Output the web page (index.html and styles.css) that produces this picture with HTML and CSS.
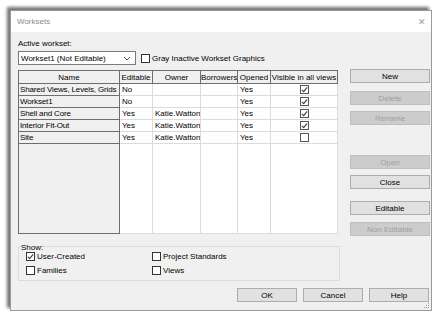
FILE: index.html
```html
<!DOCTYPE html>
<html lang="en">
<head>
    <meta charset="UTF-8">
    <title>Worksets</title>
    <link rel="stylesheet" href="styles.css">
</head>
<body>
    <div class="dialog">
        <div class="titlebar">
            <span class="title">Worksets</span>
            <span class="close">&#x2715;</span>
        </div>
        <div class="content">
            <div class="main">
                <div class="label">Active workset:</div>
                <div class="toprow">
                    <div class="select">
                        <span>Workset1 (Not Editable)</span>
                        <svg width="8" height="5" viewBox="0 0 8 5"><path d="M1 1 L4 4 L7 1" fill="none" stroke="#555" stroke-width="1"/></svg>
                    </div>
                    <label class="check"><span class="box"></span>Gray Inactive Workset Graphics</label>
                </div>
                <table class="grid">
                    <colgroup>
                        <col style="width:101px"><col style="width:33px"><col style="width:48px"><col style="width:37px"><col style="width:33px"><col>
                    </colgroup>
                    <thead>
                        <tr><th>Name</th><th>Editable</th><th>Owner</th><th>Borrowers</th><th>Opened</th><th>Visible in all views</th></tr>
                    </thead>
                    <tbody>
                        <tr><td class="name">Shared Views, Levels, Grids</td><td>No</td><td></td><td></td><td>Yes</td><td class="vis"><span class="box on"></span></td></tr>
                        <tr><td class="name">Workset1</td><td>No</td><td></td><td></td><td>Yes</td><td class="vis"><span class="box on"></span></td></tr>
                        <tr><td class="name">Shell and Core</td><td>Yes</td><td>Katie.Watton</td><td></td><td>Yes</td><td class="vis"><span class="box on"></span></td></tr>
                        <tr><td class="name">Interior Fit-Out</td><td>Yes</td><td>Katie.Watton</td><td></td><td>Yes</td><td class="vis"><span class="box on"></span></td></tr>
                        <tr><td class="name">Site</td><td>Yes</td><td>Katie.Watton</td><td></td><td>Yes</td><td class="vis"><span class="box"></span></td></tr>
                        <tr class="filler"><td class="name"></td><td></td><td></td><td></td><td></td><td></td></tr>
                    </tbody>
                </table>
                <div class="show">
                    <div class="show-title">Show:</div>
                    <div class="show-grid">
                        <label class="check"><span class="box on"></span>User-Created</label>
                        <label class="check"><span class="box"></span>Project Standards</label>
                        <label class="check"><span class="box"></span>Families</label>
                        <label class="check"><span class="box"></span>Views</label>
                    </div>
                </div>
            </div>
            <div class="side">
                <button class="btn">New</button>
                <button class="btn off gap1">Delete</button>
                <button class="btn off gap2">Rename</button>
                <button class="btn off gap3">Open</button>
                <button class="btn gap2">Close</button>
                <button class="btn gap4">Editable</button>
                <button class="btn off gap5">Non Editable</button>
            </div>
        </div>
        <div class="footer">
            <button class="btn wide">OK</button>
            <button class="btn wide">Cancel</button>
            <button class="btn wide">Help</button>
        </div>
        <svg class="grip" width="6" height="6" viewBox="0 0 6 6">
            <rect x="4" y="0" width="1" height="1" fill="#999"/>
            <rect x="2" y="2" width="1" height="1" fill="#999"/>
            <rect x="4" y="2" width="1" height="1" fill="#999"/>
            <rect x="0" y="4" width="1" height="1" fill="#999"/>
            <rect x="2" y="4" width="1" height="1" fill="#999"/>
            <rect x="4" y="4" width="1" height="1" fill="#999"/>
        </svg>
    </div>
</body>
</html>
```

FILE: styles.css
```css
body {
    margin: 0;
    background: #fff;
    font-family: "Liberation Sans", Arial, sans-serif;
    font-size: 8px;
    color: #000;
}
.dialog {
    position: relative;
    margin: 10px 0 0 10px;
    width: 422px;
    height: 301px;
    background: #f0f0f0;
    border: 1px solid #9a9a9a;
    box-sizing: border-box;
    box-shadow: -3px -3px 3px rgba(0, 0, 0, 0.55);
}
.titlebar {
    height: 21px;
    background: #fff;
    display: flex;
    align-items: center;
    justify-content: space-between;
    padding: 0 5px 0 6px;
}
.title {
    color: #8a8a8a;
}
.close {
    color: #9a9a9a;
    font-size: 9px;
}
.content {
    display: flex;
    padding: 6px 0 0 7px;
    gap: 10px;
}
.main {
    width: 322px;
}
.label {
    height: 12px;
    line-height: 12px;
}
.toprow {
    display: flex;
    align-items: center;
    gap: 5px;
    margin-top: 1px;
}
.select {
    width: 118px;
    height: 14px;
    box-sizing: border-box;
    border: 1px solid #7a7a7a;
    background: #fff;
    display: flex;
    align-items: center;
    justify-content: space-between;
    padding: 0 4px 0 2px;
}
.check {
    display: flex;
    align-items: center;
    gap: 2px;
}
.box {
    display: inline-block;
    width: 9px;
    height: 9px;
    box-sizing: border-box;
    border: 1px solid #333;
    background: #fff;
    position: relative;
}
.box.on::after {
    content: "";
    position: absolute;
    left: 2px;
    top: 0;
    width: 2px;
    height: 5px;
    border: solid #333;
    border-width: 0 1px 1px 0;
    transform: rotate(40deg);
}
.grid {
    margin-top: 5px;
    width: 320px;
    border-collapse: collapse;
    table-layout: fixed;
    background: #fff;
    border: 1px solid #6e6e6e;
}
.grid th {
    background: #f0f0f0;
    border: 1px solid #6e6e6e;
    font-weight: normal;
    height: 12px;
    padding: 0;
    white-space: nowrap;
    overflow: hidden;
}
.grid td {
    border: 1px solid #dcdcdc;
    height: 11px;
    padding: 0 2px;
    white-space: nowrap;
    overflow: hidden;
}
.grid td.name {
    background: #f0f0f0;
    border: 1px solid #6e6e6e;
    padding: 0 1px;
    letter-spacing: -0.15px;
}
.grid td.vis {
    text-align: center;
    line-height: 0;
}
.grid .box {
    border-color: #555;
}
.grid tr.filler td {
    height: 89px;
}
.show {
    margin-top: 12px;
    padding: 0 7px 0 7px;
    border: 1px solid #dcdcdc;
    height: 35px;
    box-sizing: border-box;
}
.show-title {
    margin: -4px 0 0 -5px;
    line-height: 9px;
    background: #f0f0f0;
    width: 22px;
}
.show-grid {
    display: grid;
    grid-template-columns: 126px 1fr;
    row-gap: 5px;
}
.side {
    display: flex;
    flex-direction: column;
    width: 80px;
    padding-top: 31px;
}
.btn {
    font-family: inherit;
    font-size: 8px;
    height: 14px;
    padding: 0;
    background: #e1e1e1;
    border: 1px solid #adadad;
    color: #000;
}
.btn.off {
    background: #cccccc;
    border-color: #bfbfbf;
    color: #a0a0a0;
}
.gap1 { margin-top: 8px; }
.gap2 { margin-top: 6px; }
.gap3 { margin-top: 30px; }
.gap4 { margin-top: 12px; }
.gap5 { margin-top: 7px; }
.footer {
    display: flex;
    justify-content: flex-end;
    gap: 6px;
    padding: 7px 2px 0 0;
}
.btn.wide {
    width: 60px;
}
.grip {
    position: absolute;
    right: 1px;
    bottom: 1px;
}
```
